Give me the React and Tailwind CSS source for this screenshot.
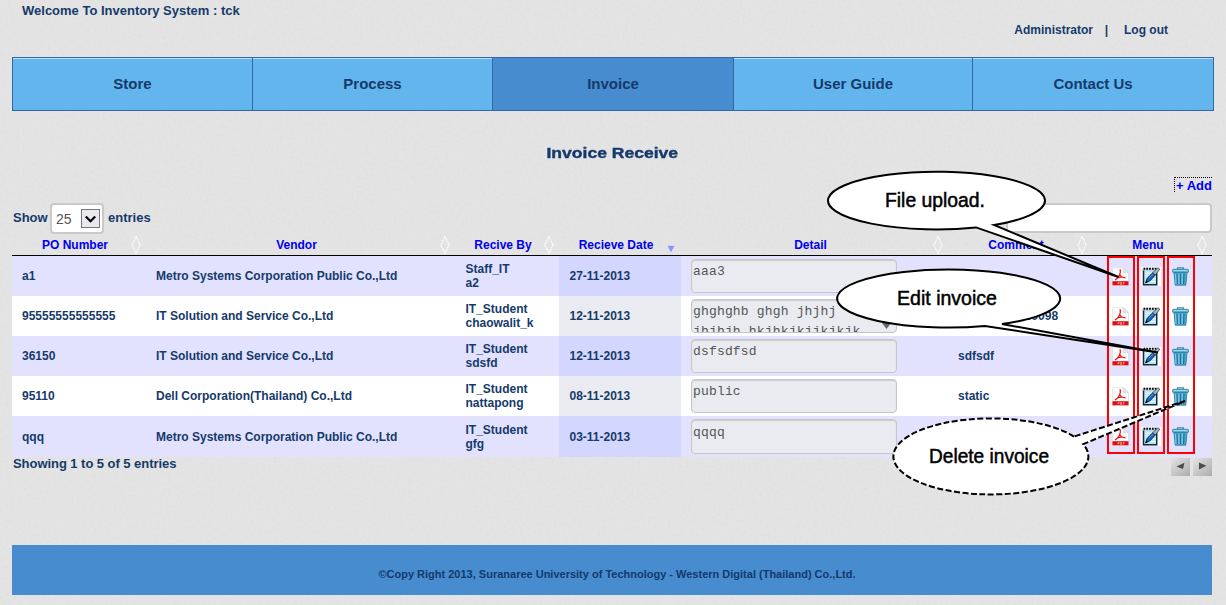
const navItems = ["Store", "Process", "Invoice", "User Guide", "Contact Us"];

const columns = [
  { label: "PO Number" },
  { label: "Vendor" },
  { label: "Recive By" },
  { label: "Recieve Date", sorted: true },
  { label: "Detail" },
  { label: "Comment" },
  { label: "Menu" },
];

const rows = [
  { po: "a1", vendor: "Metro Systems Corporation Public Co.,Ltd", by: ["Staff_IT", "a2"], date: "27-11-2013", detail: "aaa3", comment: "" },
  { po: "95555555555555", vendor: "IT Solution and Service Co.,Ltd", by: ["IT_Student", "chaowalit_k"], date: "12-11-2013", detail: "ghghghb ghgh jhjhj\njhjhjh hkjhkjkjjkjkjk", comment: "980980980989098", scroll: true },
  { po: "36150", vendor: "IT Solution and Service Co.,Ltd", by: ["IT_Student", "sdsfd"], date: "12-11-2013", detail: "dsfsdfsd", comment: "sdfsdf" },
  { po: "95110", vendor: "Dell Corporation(Thailand) Co.,Ltd", by: ["IT_Student", "nattapong"], date: "08-11-2013", detail: "public", comment: "static" },
  { po: "qqq", vendor: "Metro Systems Corporation Public Co.,Ltd", by: ["IT_Student", "gfg"], date: "03-11-2013", detail: "qqqq", comment: "" },
];

const grid = "grid grid-cols-[134px_309px_104px_122px_267px_144px_120px]";

function PaperTexture() {
  return (
    <svg className="absolute inset-0 -z-10" width="1226" height="605">
      <filter id="paper" x="0" y="0" width="100%" height="100%">
        <feTurbulence type="fractalNoise" baseFrequency="0.35" numOctaves="2" seed="4" />
        <feColorMatrix values="0 0 0 0 0.3  0 0 0 0 0.3  0 0 0 0 0.3  0.1 0 0 0 -0.04" />
      </filter>
      <rect width="1226" height="605" fill="#e4e4e4" />
      <rect width="1226" height="605" filter="url(#paper)" />
    </svg>
  );
}

function SortMark({ sorted }) {
  return (
    <svg width="10" height="18" viewBox="0 0 10 18" className="shrink-0">
      {sorted ? (
        <path d="M1 9.500h8l-4 7.500z" fill="#8c94ff" stroke="#fff" strokeWidth="0.4" />
      ) : (
        <path d="M5 .5L9 9 5 17.5 1 9z" fill="none" stroke="#fff" strokeWidth="1.2" strokeDasharray="1.6 .7" />
      )}
    </svg>
  );
}

function PdfIcon() {
  return (
    <svg width="17" height="19" viewBox="0 0 17 19">
      <path d="M.5 .8h11l5 5v12.700H.5z" fill="#fff" stroke="#dcdce2" strokeWidth=".7" />
      <path d="M11.300 .8v5h5.200z" fill="#e6e6ea" stroke="#c9c9cf" strokeWidth=".5" />
      <path d="M7.500 2.800h1.300M8.300 3v2.500L7.500 8.200 5.500 11 3 13M7.800 7.500l2 2.500 3.700.8M5.500 10.800l4-1" fill="none" stroke="#e8140f" strokeWidth="1.200" />
      <rect x=".5" y="14.200" width="16" height="4.100" fill="#e00f0f" />
      <path d="M6 17.500v-2h1.200v1H6M8.500 15.500v2h1.200v-2zM11.300 17.500v-2h1.200M11.300 16.500h1" stroke="#ffb4b4" strokeWidth=".6" fill="none" />
    </svg>
  );
}

function EditIcon() {
  return (
    <svg width="20" height="19" viewBox="0 0 20 19">
      <rect width="20" height="19" fill="#fff" />
      <path d="M2.500 2.500h13.200v15.200H2.500z" fill="#bfe3f2" stroke="#0d2c3a" strokeWidth="1.500" />
      <path d="M4 6.200h11M4 9h11M4 11.800h11M4 14.600h11" stroke="#f0faff" strokeWidth="1" />
      <rect x="2" y=".8" width="15" height="2.600" fill="#dff2fa" />
      <path d="M2.500 1.800h14" stroke="#000" strokeWidth="2" strokeDasharray="1.800 1" />
      <path d="M4.500 16l1.600-4.700L12 5.500l2.600 2.300-5.500 6z" fill="#0f5fb5" stroke="#08264d" strokeWidth=".8" />
      <path d="M11.800 5.700l5-5 2 1.500-4.500 5.800z" fill="#aab4bc" stroke="#1d2830" strokeWidth=".7" />
      <path d="M7.500 11.700l4.700-4.600" stroke="#5aaef2" strokeWidth=".9" />
      <path d="M4.500 16l.8-2.400 1.700 1.300z" fill="#000" />
    </svg>
  );
}

function TrashIcon() {
  return (
    <svg width="17" height="19" viewBox="0 0 17 19">
      <path d="M5.500 2.300V.9h6v1.400" fill="none" stroke="#3f8eab" strokeWidth="1.200" />
      <path d="M2 5.500h13L13.800 18.200H3.200z" fill="#49a5cc" stroke="#25799e" strokeWidth=".8" />
      <path d="M5 7l.4 10M8.500 7v10M12 7l-.4 10" stroke="#1c6c94" strokeWidth="1.100" />
      <path d="M3.600 7l.4 10M6.800 7l.1 10M10.200 7l-.1 10" stroke="#8fd6f0" strokeWidth=".9" />
      <rect x=".5" y="2.300" width="16" height="3.300" rx="1" fill="#5bafcb" stroke="#2f7c98" strokeWidth=".8" />
      <path d="M1.500 3.500h14" stroke="#a4dcef" strokeWidth=".9" />
    </svg>
  );
}

function PageButton({ dir }) {
  return (
    <button className="flex h-[18px] w-[19px] items-center justify-center bg-gradient-to-br from-[#e4e4e4] to-[#adadad]">
      <svg width="9" height="8" viewBox="0 0 9 8" className="-mt-[3px]">
        {dir === "prev" ? (
          <path d="M.5 4.500L8.500 .8 7 7z" fill="#4c4c4c" />
        ) : (
          <path d="M8.500 3.800L1 .5V7.500z" fill="#4c4c4c" />
        )}
      </svg>
    </button>
  );
}

function Row({ row, index }) {
  const odd = index % 2 === 0;
  const last = index === rows.length - 1;
  return (
    <div className={`${grid} items-stretch ${last ? "h-[41px]" : "h-10"} ${odd ? "bg-[#e2e2ff]" : "bg-white"}`}>
      <div className="flex items-center pl-[10px]">{row.po}</div>
      <div className="flex items-center pl-[10px]">{row.vendor}</div>
      <div className="flex flex-col justify-center pl-[10.5px] leading-[14px]">
        <span>{row.by[0]}</span>
        <span>{row.by[1]}</span>
      </div>
      <div className={`flex items-center pl-[10.5px] ${odd ? "bg-[#d3d6ff]" : "bg-[#eaebf0]"}`}>{row.date}</div>
      <div className="pl-[10px] pt-[3px]">
        <div className={`relative ${last ? "h-[35px]" : "h-[34px]"} w-[206px] overflow-hidden whitespace-pre rounded-[4px] border border-[#c6c6c8] bg-[#eaebf0] px-px ${last ? "pt-[3px]" : "pt-[2px]"} font-['Liberation_Mono',monospace] text-[13px] font-normal leading-[20px] tracking-[0.17px] text-[#555] shadow-[inset_0_1px_1px_#ccc]`}>
          {row.detail}
          {row.scroll && (
            <svg className="absolute right-[5px] bottom-[3px]" width="9" height="6">
              <path d="M0 0h9L4.500 6z" fill="#666" />
            </svg>
          )}
        </div>
      </div>
      <div className="flex items-center pl-[10px]">{row.comment}</div>
      <div className="flex items-center pl-[20px]">
        <span className="w-[29px]"><PdfIcon /></span>
        <span className="w-[31px]"><EditIcon /></span>
        <span><TrashIcon /></span>
      </div>
    </div>
  );
}

function Callouts() {
  return (
    <svg className="pointer-events-none absolute left-0 top-0" width="1226" height="605" fill="none">
      <g stroke="#f00" strokeWidth="2">
        <rect x="1108" y="257" width="26" height="196" />
        <rect x="1138" y="257" width="26" height="196" />
        <rect x="1168" y="257" width="26" height="196" />
      </g>
      <g fill="#fff" stroke="#000" strokeWidth="2" strokeLinejoin="miter">
        <path d="M994 225A108.500 28.800 0 1 0 976 227.400L1118.500 277z" />
        <path d="M1002 324A111.500 29 0 1 0 985 325.950L1158 352.500z" />
        <path d="M1074 436.560A97.500 38 0 1 0 1083.200 444.200L1185 401z" strokeDasharray="6 2.500" />
      </g>
      <g fill="#000" stroke="#000" strokeWidth=".5" fontFamily="Liberation Sans, sans-serif" fontWeight="400" fontSize="20">
        <text x="885" y="207" textLength="100" lengthAdjust="spacingAndGlyphs">File upload.</text>
        <text x="897" y="305" textLength="100" lengthAdjust="spacingAndGlyphs">Edit invoice</text>
        <text x="929" y="463" textLength="120" lengthAdjust="spacingAndGlyphs">Delete invoice</text>
      </g>
    </svg>
  );
}

export default function App() {
  return (
    <div className="relative isolate flex h-[605px] w-[1226px] flex-col overflow-hidden pl-3 pr-[14px] font-['Liberation_Sans',sans-serif] text-[12px] font-bold text-[#153a6b]">
      <PaperTexture />
      <header className="flex h-[57px] flex-col">
        <div className="h-[22px] pl-[10px] pt-[1px] text-[13px] leading-[20px]">Welcome To Inventory System : tck</div>
        <div className="flex justify-end pr-[44px] leading-4">
          <span>Administrator</span>
          <span className="w-[31px] pr-1 text-center">|</span>
          <span>Log out</span>
        </div>
      </header>

      <nav className="grid h-[54px] w-[1202px] shrink-0 grid-cols-[240px_240px_241px_239px_241px] border-y border-l border-[#3566a5]">
        {navItems.map((item) => (
          <a
            key={item}
            className={`flex items-center justify-center border-r border-[#3566a5] text-[15px] ${item === "Invoice" ? "bg-[#468ccf]" : "bg-[#62b5ed] shadow-[inset_0_1px_0_#b5e0fa]"}`}
          >
            {item}
          </a>
        ))}
      </nav>

      <h1 className="mt-[32px] flex h-5 justify-center text-[15px] font-bold leading-5">
        <span className="scale-x-[1.17] [-webkit-text-stroke:0.4px_#153a6b]">Invoice Receive</span>
      </h1>

      <div className="mt-[14px] flex h-4 justify-end">
        <a className="h-[15px] border-l border-t border-dotted border-black pl-px text-[13px] leading-[15px] text-[#0000f0]">+ Add</a>
      </div>

      <div className="mt-[10px] flex h-[32px] justify-between">
        <div className="flex pl-px text-[13px] leading-[30px]">
          <span className="w-[37px]">Show</span>
          <span className="flex h-[31px] w-[54px] items-center justify-between rounded-[4px] border-2 border-[#c9c9c9] bg-white pl-1 pr-[2px] text-[14px] font-normal text-[#555]">
            25
            <span className="flex h-[19px] w-[19px] items-center justify-center border border-[#777] bg-[#e8e8ee]">
              <svg width="11" height="8" viewBox="0 0 11 8">
                <path d="M.8 1.500L5.500 6.200 10.200 1.500" fill="none" stroke="#000" strokeWidth="2.200" />
              </svg>
            </span>
          </span>
          <span className="pl-1">entries</span>
        </div>
        <div className="h-[30px] w-[206px] rounded-[4px] border-2 border-[#c9c9c9] bg-white" />
      </div>

      <div className={`${grid} h-[21px] w-[1200px] shrink-0 border-b border-black text-[#0000f0]`}>
        {columns.map((c) => (
          <div key={c.label} className="flex items-center pl-[10px] pr-[5px]">
            <span className="flex-1 pr-[3px] text-center leading-5">{c.label}</span>
            <SortMark sorted={c.sorted} />
          </div>
        ))}
      </div>
      <div className="w-[1200px]">
        {rows.map((r, i) => (
          <Row key={r.po} row={r} index={i} />
        ))}
      </div>

      <div className="flex justify-between">
        <div className="pl-px text-[13px] leading-[14px] tracking-[-0.05px]">Showing 1 to 5 of 5 entries</div>
        <div className="flex gap-[3px] pt-[1px]">
          <PageButton dir="prev" />
          <PageButton dir="next" />
        </div>
      </div>

      <footer className="mb-[10px] mt-auto flex h-[50px] w-[1200px] shrink-0 items-center justify-center bg-[#468ccf] pl-[10px] pt-2 text-[11px]">
        ©Copy Right 2013, Suranaree University of Technology - Western Digital (Thailand) Co.,Ltd.
      </footer>

      <Callouts />
    </div>
  );
}
